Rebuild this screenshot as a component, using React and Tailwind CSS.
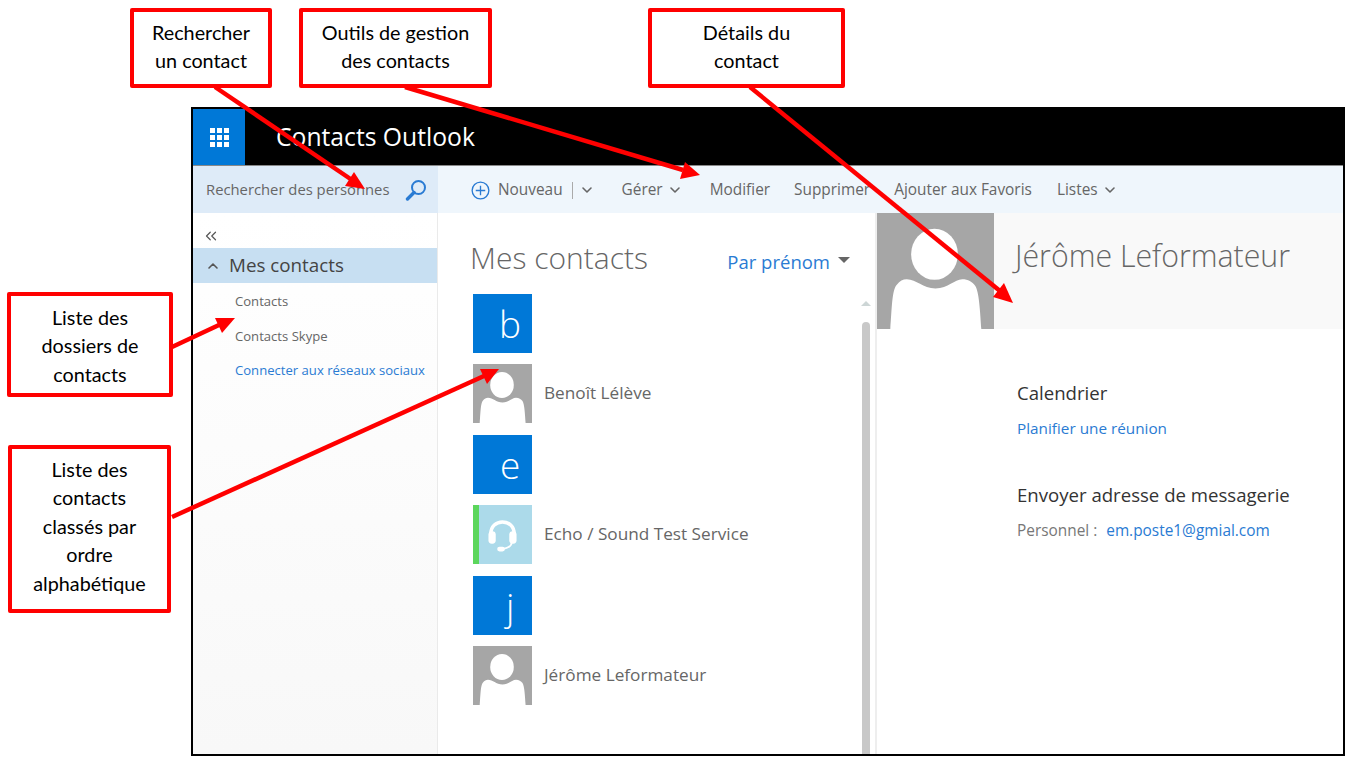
import { ChevronDown, ChevronUp, ChevronsLeft } from 'lucide-react';

const UI_FONT = "font-['Open_Sans','Noto_Sans',sans-serif]";

function Person({ className }) {
  return (
    <svg viewBox="0 0 59 59" preserveAspectRatio="none" className={className} aria-hidden="true">
      <rect width="59" height="59" fill="#a6a6a6" />
      <ellipse cx="29" cy="21" rx="11.8" ry="13" fill="#fff" />
      <path
        d="M6.7 59C7.5 49 7.5 39 10 36.5C11.5 34.5 13 33.7 15 33.7C20 33.7 23 38.4 29.5 38.4C36 38.4 39 33.7 43 33.7C46 33.7 48 35 49.5 37C51.5 40 52 50 52.6 59Z"
        fill="#fff"
      />
    </svg>
  );
}

function Headset() {
  return (
    <div className="w-[59px] h-[59px] bg-[#acdaea] border-l-[6px] border-[#5cd65c] flex items-center justify-center">
      <svg viewBox="0 0 32 34" className="w-[31px] h-[33px] mr-[6px] mt-[2px]" fill="none" aria-hidden="true">
        <path d="M4 19V15C4 7.5 9.5 3 16 3C22.5 3 28 7.5 28 15V19" stroke="#fff" strokeWidth="3.6" />
        <rect x="1.5" y="12.5" width="7.5" height="13" rx="3.5" fill="#fff" />
        <rect x="23" y="12.5" width="7.5" height="13" rx="3.5" fill="#fff" />
        <path d="M25.5 24C25.5 28.5 22 30 16 31" stroke="#fff" strokeWidth="1.8" />
        <rect x="10.5" y="28.5" width="8" height="5" rx="2.5" fill="#fff" />
      </svg>
    </div>
  );
}

function Letter({ children, pad }) {
  return (
    <div className={`w-[59px] h-[59px] bg-[#0078d7] text-white text-[37px] font-light leading-[59px] ${pad}`}>
      {children}
    </div>
  );
}

function Row({ avatar, name }) {
  return (
    <div className="flex items-center gap-[12px] h-[59px]">
      {avatar}
      <span className="text-[17.2px] text-[#666] -mt-[2px]">{name}</span>
    </div>
  );
}

function Callout({ lines, className }) {
  return (
    <div
      className={`absolute bg-white border-[4px] border-[#ff0000] rounded-[2px] flex flex-col items-center justify-center text-black text-[19.8px] leading-[28.5px] font-['Lato',sans-serif] ${className}`}
    >
      {lines.map((line) => (
        <span key={line}>{line}</span>
      ))}
    </div>
  );
}

function Arrows() {
  const arrows = [
    ['M215 87L352 180', '365,189 345,186 354,172'],
    ['M405 87L683 170', '700,175 680,179 685,162'],
    ['M750 87L1000 291', '1013,303 993,297 1004,283'],
    ['M172 347L219 325', '235,318 222,333 215,318'],
    ['M172 517L484 376', '499,369 487,384 480,369'],
  ];
  return (
    <svg className="absolute left-0 top-0 w-[1350px] h-[762px] pointer-events-none" viewBox="0 0 1350 762" aria-hidden="true">
      {arrows.map(([line, head]) => (
        <g key={line}>
          <path d={line} stroke="#ff0000" strokeWidth="4.5" fill="none" />
          <polygon points={head} fill="#ff0000" />
        </g>
      ))}
    </svg>
  );
}

export default function App() {
  return (
    <div className={`relative w-[1350px] h-[762px] bg-white overflow-hidden pt-[107px] pl-[191px] ${UI_FONT}`}>
      <div className="w-[1154px] h-[649px] border-2 border-black flex flex-col overflow-hidden">
        {/* bandeau noir */}
        <header className="h-[57px] shrink-0 bg-black flex items-center border-b border-[#888]">
          <div className="w-[52px] h-full bg-[#0078d7] flex items-center justify-center">
            <div className="grid grid-cols-3 gap-[2px]">
              {[1, 2, 3, 4, 5, 6, 7, 8, 9].map((n) => (
                <span key={n} className="w-[5px] h-[5px] bg-white" />
              ))}
            </div>
          </div>
          <span className="ml-[31px] text-white text-[24.7px]">Contacts Outlook</span>
        </header>

        {/* barre d'outils */}
        <div className="h-[47px] shrink-0 flex bg-[#eff6fc] text-[#666] text-[15.4px]">
          <div className="w-[245px] bg-[#deebf8] flex items-center pl-[13px] pr-[11px] justify-between">
            <span className="text-[14.8px] whitespace-nowrap">Rechercher des personnes</span>
            <svg viewBox="0 0 22 22" className="w-[22px] h-[22px]" fill="none" aria-hidden="true">
              <circle cx="13.5" cy="8.5" r="6.5" stroke="#2a7bd3" strokeWidth="2" />
              <path d="M9 13.5L2.5 20" stroke="#2a7bd3" strokeWidth="3.4" strokeLinecap="round" />
            </svg>
          </div>
          <div className="flex items-center pl-[33px] pt-[1px] whitespace-nowrap">
            <svg viewBox="0 0 20 20" className="w-[19px] h-[19px] mr-[8px]" fill="none" stroke="#2a7bd3" strokeWidth="1.4" aria-hidden="true">
              <circle cx="10" cy="10" r="8.8" />
              <path d="M10 5V15M5 10H15" />
            </svg>
            <span>Nouveau</span>
            <span className="ml-[9px] w-px h-[17px] bg-[#aaa]" />
            <ChevronDown className="ml-[6px] w-[16px] h-[16px]" strokeWidth={2.4} />
            <span className="ml-[27px]">Gérer</span>
            <ChevronDown className="ml-[4px] w-[16px] h-[16px]" strokeWidth={2.4} />
            <span className="ml-[27px]">Modifier</span>
            <span className="ml-[24px]">Supprimer</span>
            <span className="ml-[24px]">Ajouter aux Favoris</span>
            <span className="ml-[25px]">Listes</span>
            <ChevronDown className="ml-[4px] w-[16px] h-[16px]" strokeWidth={2.4} />
          </div>
        </div>

        <div className="flex-1 flex min-h-0">
          {/* dossiers */}
          <aside className="w-[245px] shrink-0 border-r border-[#eaeaea] bg-gradient-to-b from-white to-[#f8f8f8]">
            <div className="h-[35px] flex items-end pl-[9px] pb-[3px]">
              <ChevronsLeft className="w-[18px] h-[18px] text-[#555]" strokeWidth={1.6} />
            </div>
            <div className="h-[35px] bg-[#c7dff2] flex items-center pl-[12px] text-[18.8px] text-[#444]">
              <ChevronUp className="w-[16px] h-[16px] text-[#555]" strokeWidth={2.4} />
              <span className="ml-[8px]">Mes contacts</span>
            </div>
            <ul className="pl-[42px] text-[13.1px] text-[#666]">
              <li className="h-[37px] flex items-center">Contacts</li>
              <li className="h-[34px] flex items-center">Contacts Skype</li>
              <li className="h-[34px] flex items-center text-[#2a7bd3] whitespace-nowrap">Connecter aux réseaux sociaux</li>
            </ul>
          </aside>

          {/* liste des contacts */}
          <main className="w-[439px] shrink-0 relative pl-[35px] border-r-2 border-[#eee]">
            <div className="flex items-center h-[81px] pt-[8px] w-[377px]">
              <h1 className="text-[30px] font-light text-[#666] -ml-[3px] whitespace-nowrap">Mes contacts</h1>
              <span className="ml-auto text-[18.5px] text-[#2a7bd3] mt-[9px]">Par prénom</span>
              <span className="ml-[8px] mt-[5px] w-0 h-0 border-x-[6px] border-x-transparent border-t-[6px] border-t-[#666]" />
            </div>
            <div className="flex flex-col gap-[11.4px]">
              <Row avatar={<Letter pad="pl-[26px]">b</Letter>} />
              <Row avatar={<Person className="w-[59px] h-[59px]" />} name="Benoît Lélève" />
              <Row avatar={<Letter pad="pl-[27px]">e</Letter>} />
              <Row avatar={<Headset />} name="Echo / Sound Test Service" />
              <Row avatar={<Letter pad="pl-[33px]">j</Letter>} />
              <Row avatar={<Person className="w-[59px] h-[59px]" />} name="Jérôme Leformateur" />
            </div>
            {/* ascenseur */}
            <div className="absolute right-[5px] top-[88px] bottom-0 w-[8px] flex flex-col items-center">
              <span className="w-0 h-0 border-x-[5px] border-x-transparent border-b-[5px] border-b-[#cdd6d6]" />
              <span className="mt-[16px] flex-1 w-[8px] bg-[#c8c8c8] rounded-t-[4px]" />
            </div>
          </main>

          {/* fiche du contact */}
          <section className="flex-1 min-w-0">
            <div className="h-[116px] flex bg-[#f9f9f9]">
              <Person className="w-[117px] h-[116px] shrink-0" />
              <h2 className="ml-[21px] mt-[20px] text-[30.3px] font-light text-[#666] whitespace-nowrap">Jérôme Leformateur</h2>
            </div>
            <div className="pl-[140px] pt-[50px]">
              <h3 className="text-[18.6px] leading-[28px] text-[#333]">Calendrier</h3>
              <a className="block mt-[11px] text-[15.3px] leading-[20px] text-[#2a7bd3]">Planifier une réunion</a>
              <h3 className="mt-[43px] text-[18.6px] leading-[28px] text-[#333]">Envoyer adresse de messagerie</h3>
              <p className="mt-[12px] text-[15.4px] leading-[20px] whitespace-nowrap">
                <span className="text-[#777]">Personnel :</span>
                <span className="ml-[9px] text-[#2a7bd3]">em.poste1@gmial.com</span>
              </p>
            </div>
          </section>
        </div>
      </div>

      <Arrows />
      <Callout lines={['Rechercher', 'un contact']} className="left-[130px] top-[8px] w-[142px] h-[80px] pb-[4px]" />
      <Callout lines={['Outils de gestion', 'des contacts']} className="left-[299px] top-[8px] w-[193px] h-[80px] pb-[4px]" />
      <Callout lines={['Détails du', 'contact']} className="left-[648px] top-[8px] w-[197px] h-[80px] pb-[4px]" />
      <Callout lines={['Liste des', 'dossiers de', 'contacts']} className="left-[7px] top-[292px] w-[166px] h-[105px] pt-[2px]" />
      <Callout
        lines={['Liste des', 'contacts', 'classés par', 'ordre', 'alphabétique']}
        className="left-[8px] top-[445px] w-[163px] h-[168px] pb-[6px]"
      />
    </div>
  );
}
